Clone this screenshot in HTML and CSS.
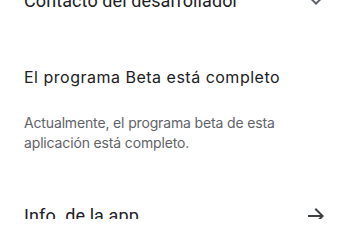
FILE: index.html
```html
<!DOCTYPE html>
<html lang="es">
<head>
<meta charset="utf-8">
<link rel="stylesheet" href="styles.css">
</head>
<body>
<div class="page">
  <div class="row row-top">
    <span class="row-title">Contacto del desarrollador</span>
    <svg class="chev" width="24" height="24" viewBox="0 0 24 24"><path d="M7.4 8.6 12 13.2l4.6-4.6L18 10l-6 6-6-6z" fill="#5f6368"/></svg>
  </div>
  <div class="beta">
    <h2 class="beta-title">El programa Beta está completo</h2>
    <p class="beta-text">Actualmente, el programa beta de esta aplicación está completo.</p>
  </div>
  <div class="row row-bottom">
    <span class="row-title">Info. de la app</span>
    <svg class="arrow" width="24" height="24" viewBox="0 0 24 24"><path d="M12 4l-1.41 1.41L16.17 11H4v2h12.17l-5.58 5.59L12 20l8-8z" fill="#3c4043"/></svg>
  </div>
</div>
</body>
</html>
```
FILE: styles.css
```css
html, body {
  margin: 0;
  padding: 0;
  background: #ffffff;
  overflow: hidden;
}
body {
  width: 350px;
  height: 219px;
  font-family: Roboto, "Noto Sans", sans-serif;
  color: #202124;
}
.page {
  display: flex;
  flex-direction: column;
  padding: 0 24px;
  margin-top: -11px;
}
.row {
  display: flex;
  align-items: center;
  justify-content: space-between;
  height: 24px;
}
.row-title {
  font-size: 18px;
  line-height: 24px;
  color: #202124;
  letter-spacing: 0.1px;
}
.chev, .arrow {
  margin-right: -2px;
}
.beta {
  padding-top: 52px;
}
.beta-title {
  margin: 0;
  font-family: Inter, Roboto, sans-serif;
  font-size: 16px;
  font-weight: 400;
  line-height: 24px;
  color: #202124;
  letter-spacing: 0.5px;
}
.beta-text {
  margin: 24px 0 0;
  font-family: Inter, Roboto, sans-serif;
  font-size: 14px;
  line-height: 20px;
  color: #5f6368;
  letter-spacing: -0.15px;
  max-width: 262px;
}
.row-bottom {
  margin-top: 51px;
}
```
